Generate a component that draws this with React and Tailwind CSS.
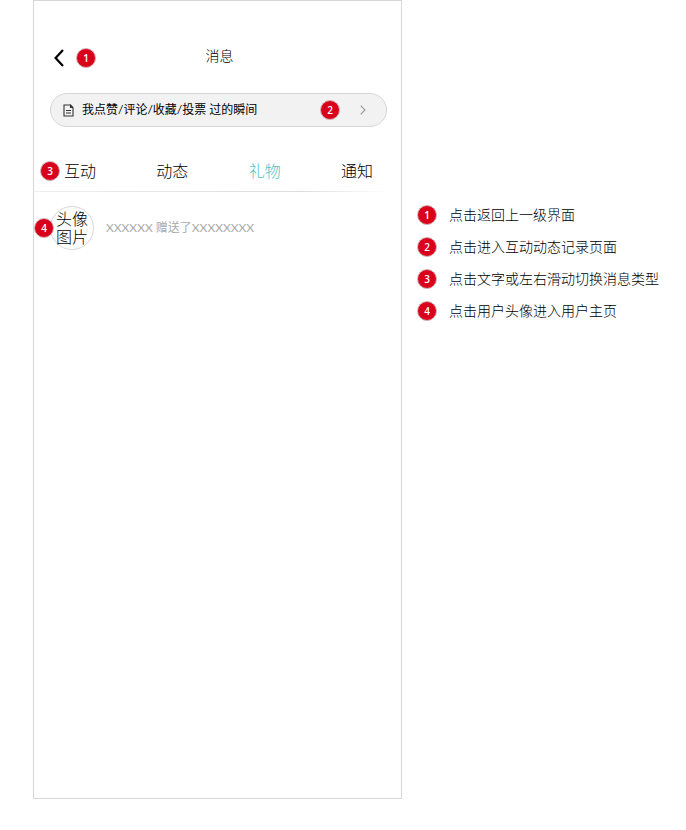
import React, { useState } from 'react';

const tabs = ['互动', '动态', '礼物', '通知'];

const notes = [
  '点击返回上一级界面',
  '点击进入互动动态记录页面',
  '点击文字或左右滑动切换消息类型',
  '点击用户头像进入用户主页',
];

const Badge = ({ number, className = '' }) => (
  <span
    className={`flex size-5 shrink-0 items-center justify-center rounded-full border border-[#d5b4b8] bg-[#d9001b] font-['Open_Sans','Noto_Sans',sans-serif] text-[10px] leading-none font-semibold text-white ${className}`}
  >
    {number}
  </span>
);

const BackIcon = () => (
  <svg width="10" height="18" viewBox="0 0 10 18" fill="none" stroke="#000" strokeWidth="2.2" aria-hidden="true">
    <path d="M9 1L1.6 9L9 17" />
  </svg>
);

const DocumentIcon = () => (
  <svg width="11" height="13" viewBox="0 0 11 13" fill="none" stroke="#333" strokeWidth="1.1" aria-hidden="true">
    <path d="M7.5 1H1V12H10V3.5L7.5 1V3.5H10" />
    <path d="M3 6.5H8M3 9H8" />
  </svg>
);

const ChevronIcon = () => (
  <svg width="6" height="10" viewBox="0 0 6 10" fill="none" stroke="#999" strokeWidth="1.1" aria-hidden="true">
    <path d="M0.7 0.7L5 5L0.7 9.3" />
  </svg>
);

const Phone = () => {
  const [activeTab, setActiveTab] = useState('礼物');

  return (
    <main className="max-w-[369px] flex-1 border border-[#d7d7d7]">
      <header className="mt-11 grid grid-cols-[1fr_auto_1fr] items-center pr-4 pl-5">
        <div className="flex items-center gap-3">
          <button type="button" aria-label="返回" className="flex h-[26px] items-center">
            <BackIcon />
          </button>
          <Badge number={1} />
        </div>
        <h1 className="pb-1 text-sm font-light">消息</h1>
      </header>

      <div className="mt-[22px] pr-3.5 pl-4">
        <a
          href="#records"
          className="flex h-[34px] items-center rounded-full border border-[#d7d7d7] bg-[#f2f2f2] pr-5 pl-3 text-xs"
        >
          <DocumentIcon />
          <span className="ml-2 flex-1">我点赞/评论/收藏/投票 过的瞬间</span>
          <Badge number={2} className="mr-5" />
          <ChevronIcon />
        </a>
      </div>

      <div className="mt-8 flex items-center gap-1 pr-7 pl-1.5">
        <Badge number={3} />
        <nav className="flex flex-1 justify-between">
          {tabs.map((tab) => (
            <button
              key={tab}
              type="button"
              onClick={() => setActiveTab(tab)}
              className={`text-base leading-6 font-light ${tab === activeTab ? 'text-[#4ac5c0]' : 'text-black'}`}
            >
              {tab}
            </button>
          ))}
        </nav>
      </div>
      <div className="mt-2 mr-3 h-px bg-linear-to-r from-[#eee] via-[#ddd] via-75% to-white" />

      <div className="mt-3.5 flex items-center gap-3 px-4">
        <div className="relative">
          <a
            href="#profile"
            className="flex size-11 items-center justify-center rounded-full border border-[#d7d7d7] text-center text-base leading-[18px] font-light"
          >
            头像
            <br />
            图片
          </a>
          <Badge number={4} className="absolute top-3 -left-4" />
        </div>
        <p className="text-xs text-[#aaa]">XXXXXX 赠送了XXXXXXXX</p>
      </div>
    </main>
  );
};

const App = () => (
  <div className="flex min-h-screen gap-[15px] bg-white pb-[31px] pl-[33px] font-['Lato','Noto_Sans_CJK_SC',sans-serif] text-black">
    <Phone />
    <ol className="mt-[205px] space-y-3 pr-4 text-sm font-light">
      {notes.map((note, index) => (
        <li key={note} className="flex items-center gap-3 whitespace-nowrap">
          <Badge number={index + 1} />
          {note}
        </li>
      ))}
    </ol>
  </div>
);

export default App;
